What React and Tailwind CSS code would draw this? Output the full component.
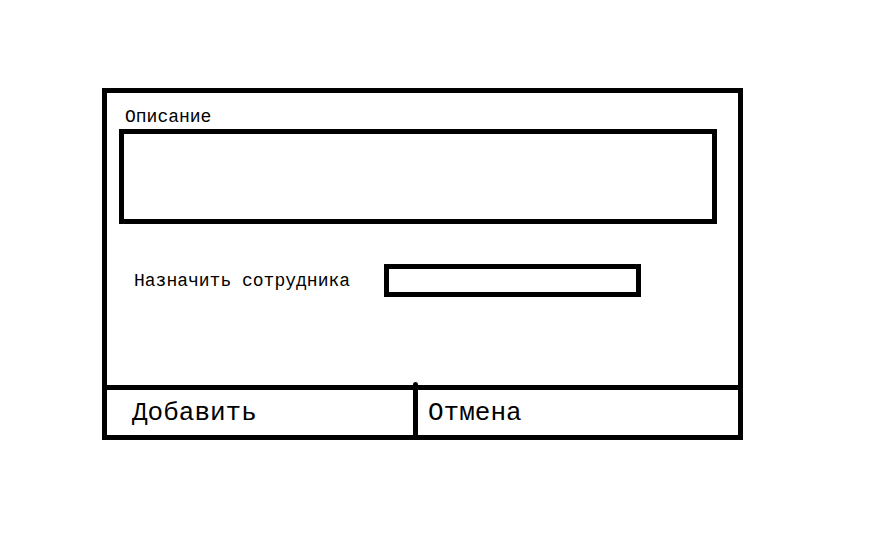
export default function App() {
  return (
    <div className="w-[894px] h-[534px] bg-white pt-[88px] pl-[102px]" style={{ fontFamily: '"Liberation Mono", "Courier New", monospace' }}>
      <div className="w-[641px] h-[352px] border-[5px] border-black flex flex-col text-black">
        <div className="pt-[15px] pl-[18px] text-[18px] leading-none">Описание</div>
        <div className="mt-[3px] ml-[12px] w-[598px] h-[95px] border-[5px] border-black"></div>

        <div className="mt-[40px] pl-[27px] flex items-center">
          <span className="w-[250px] text-[18px] leading-none">Назначить сотрудника</span>
          <div className="w-[257px] h-[33px] border-[5px] border-black"></div>
        </div>

        <div className="flex-1"></div>

        <div className="h-[50px] border-t-[5px] border-black flex">
          <button className="relative w-[311px] border-r-[5px] border-black flex items-center pl-[25px] text-[26px] leading-none">
            Добавить
            <span className="absolute -right-[5px] -top-[8px] w-[5px] h-[4px] rounded-t-full bg-black"></span>
          </button>
          <button className="flex-1 flex items-center pl-[10px] text-[26px] leading-none">Отмена</button>
        </div>
      </div>
    </div>
  );
}
